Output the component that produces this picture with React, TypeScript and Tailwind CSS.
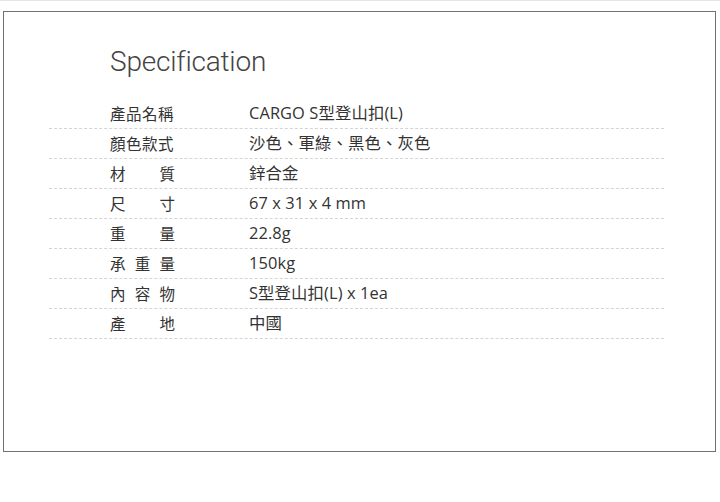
const rows: { label: string[]; value: string }[] = [
  { label: ["產品名稱"], value: "CARGO S型登山扣(L)" },
  { label: ["顏色款式"], value: "沙色、軍綠、黑色、灰色" },
  { label: ["材", "質"], value: "鋅合金" },
  { label: ["尺", "寸"], value: "67 x 31 x 4 mm" },
  { label: ["重", "量"], value: "22.8g" },
  { label: ["承", "重", "量"], value: "150kg" },
  { label: ["內", "容", "物"], value: "S型登山扣(L) x 1ea" },
  { label: ["產", "地"], value: "中國" },
];

export default function App() {
  return (
    <div className="w-[720px] h-[502px] bg-white">
      <div className="h-px bg-[#e6e6e6]" />
      <div className="ml-[3px] mt-[10px] w-[713px] h-[441px] border border-[#707070] bg-white">
        <div className="pl-[106px] pt-[33px] text-[28px] leading-[34px] text-[#444] font-light font-['Roboto',sans-serif] tracking-[-0.2px]">
          Specification
        </div>
        <div className="mt-[20px] ml-[45px] w-[615px] font-['Noto_Sans_CJK_TC','Noto_Sans',sans-serif] text-[16px] text-[#333]">
          {rows.map((r, i) => (
            <div
              key={i}
              className="h-[30px] flex items-center border-b border-dashed border-[#d4d4d4]"
            >
              <div className="ml-[61px] w-[65px] flex justify-between text-[15.5px]">
                {r.label.length === 1 ? (
                  <span className="tracking-[0.5px]">{r.label[0]}</span>
                ) : (
                  r.label.map((c, j) => <span key={j}>{c}</span>)
                )}
              </div>
              <div className="ml-[74px] font-['Open_Sans','Noto_Sans_CJK_TC',sans-serif] text-[16.4px] tracking-[0.1px]">
                {r.value}
              </div>
            </div>
          ))}
        </div>
      </div>
    </div>
  );
}
